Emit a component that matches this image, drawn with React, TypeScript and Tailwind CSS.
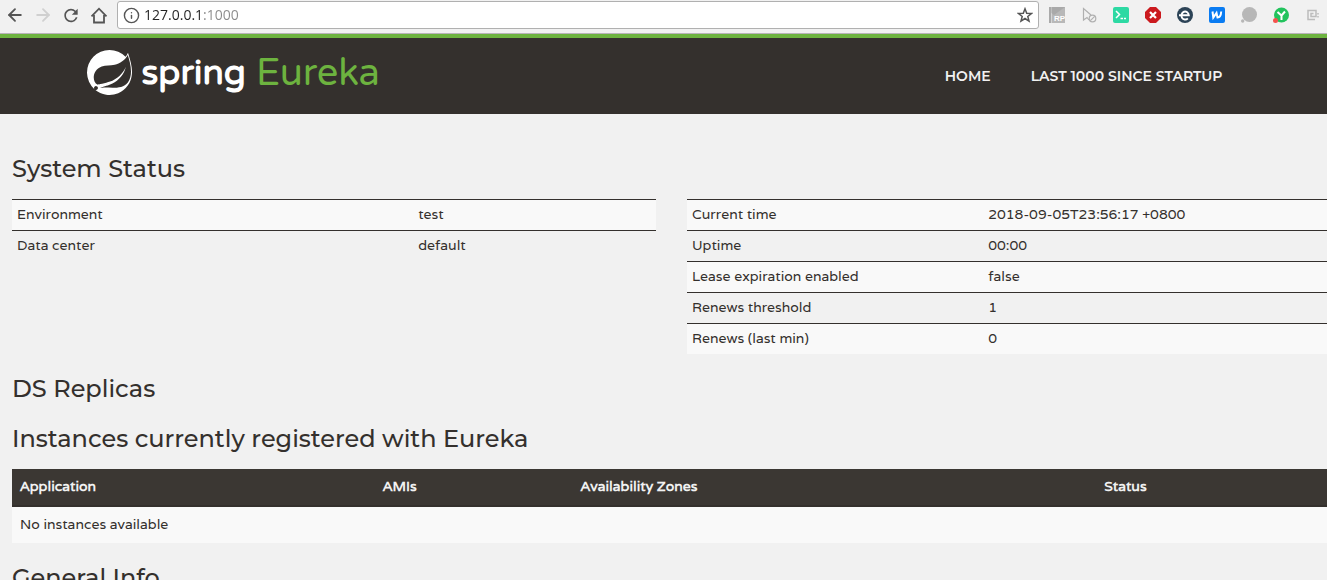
import { ReactNode } from "react";
import { ArrowLeft, ArrowRight, Info, Star } from "lucide-react";
import { MdRefresh } from "react-icons/md";
import { SiSpring } from "react-icons/si";

const environment = [
    ["Environment", "test"],
    ["Data center", "default"],
];

const status = [
    ["Current time", "2018-09-05T23:56:17 +0800"],
    ["Uptime", "00:00"],
    ["Lease expiration enabled", "false"],
    ["Renews threshold", "1"],
    ["Renews (last min)", "0"],
];

function ToolButton({ label, children }: { label: string; children: ReactNode }) {
    return (
        <button type="button" aria-label={label} className="flex size-5 shrink-0 items-center justify-center text-[#555]">
            {children}
        </button>
    );
}

function BrowserBar() {
    return (
        <div className="flex h-[34px] items-start gap-2 border-b border-[#b8b4b8] bg-[#f1f1f1] pt-px pr-1 pl-[5px]">
            <nav className="flex h-7 items-center gap-2" aria-label="Browser">
                <ToolButton label="Back"><ArrowLeft size={20} strokeWidth={2.2} /></ToolButton>
                <ToolButton label="Forward"><ArrowRight size={20} strokeWidth={2.2} className="text-[#d0d0d0]" /></ToolButton>
                <ToolButton label="Reload"><MdRefresh size={21} /></ToolButton>
                <ToolButton label="Home page">
                    <svg width="18" height="18" viewBox="0 0 18 18" fill="none" stroke="currentColor" strokeWidth="1.800">
                        <path d="M1.5 10.300 9 2.700l7.500 7.600M4 9v7.500h10V9" />
                    </svg>
                </ToolButton>
            </nav>
            <form className="flex h-7 flex-1 items-center gap-1 rounded-[3px] border border-[#b0b0b0] bg-white pr-[3px] pl-[5px]">
                <Info size={17} className="shrink-0 text-[#555]" />
                <input
                    type="text"
                    aria-label="Address"
                    defaultValue="127.0.0.1:1000"
                    className="h-6 min-w-0 flex-1 bg-[linear-gradient(90deg,#222_58px,#8a8a8a_58px)] bg-clip-text pb-0.5 font-['Open_Sans',sans-serif] text-sm text-transparent outline-none"
                />
                <ToolButton label="Bookmark">
                    <svg width="16" height="16" viewBox="0 0 16 16" fill="none" stroke="currentColor" strokeWidth="1.500">
                        <path d="m8 1.800 1.700 4.400 4.700.3-3.600 3 1.200 4.600L8 11.500l-4 2.600 1.200-4.600-3.600-3 4.700-.3z" />
                    </svg>
                </ToolButton>
            </form>
            <div className="flex h-7 items-center gap-3">
                <ToolButton label="RP">
                    <svg width="16" height="18" viewBox="0 0 16 18">
                        <path d="M0 1h2v16H0z" fill="#aaa" />
                        <path d="M2.500 1H16v16H2.500z" fill="#b8b8b8" />
                        <path d="M2.500 1H16L5 9 2.500 7z" fill="#a9a9a9" />
                        <text x="5" y="15" fontSize="8" fontWeight="700" fontFamily="Liberation Sans" fill="#fff">RP</text>
                    </svg>
                </ToolButton>
                <ToolButton label="Pointer">
                    <svg width="16" height="16" viewBox="0 0 16 16" fill="none" stroke="#b0b0b0" strokeWidth="1.200">
                        <path d="M8 13 6 10.500 2.500 13V1.500L10 8" />
                        <circle cx="11.500" cy="11.500" r="3.300" />
                        <path d="m9.300 13.700 4.400-4.400" />
                    </svg>
                </ToolButton>
                <ToolButton label="Terminal">
                    <svg width="16" height="16" viewBox="0 0 16 16">
                        <rect width="16" height="16" rx="2" fill="#2dd9a3" />
                        <path d="m3 4 3.500 3.500L3 11M7.500 11.500H10M11 11.500h2" fill="none" stroke="#fff" strokeWidth="1.500" />
                    </svg>
                </ToolButton>
                <ToolButton label="Blocked">
                    <svg width="16" height="16" viewBox="0 0 16 16">
                        <path d="M5 0h6l5 5v6l-5 5H5l-5-5V5z" fill="#cb1a1e" />
                        <path d="m5 5 6 6M11 5l-6 6" stroke="#fff" strokeWidth="2.200" />
                    </svg>
                </ToolButton>
                <ToolButton label="Edge">
                    <svg width="16" height="16" viewBox="0 0 16 16">
                        <circle cx="8" cy="8" r="8" fill="#2c4356" />
                        <path d="M2 8.300h9.800a3.700 4 0 1 0-1 3" fill="none" stroke="#fff" strokeWidth="1.900" />
                    </svg>
                </ToolButton>
                <ToolButton label="W">
                    <svg width="16" height="16" viewBox="0 0 16 16">
                        <rect width="16" height="16" rx="2" fill="#0a7cf2" />
                        <path d="m3.500 4.500.8 6L7.500 6l1 4.500c2 0 3.500-2 3.700-6" fill="none" stroke="#fff" strokeWidth="2" />
                    </svg>
                </ToolButton>
                <ToolButton label="Bubble">
                    <svg width="16" height="16" viewBox="0 0 16 16" fill="#b7b7b7">
                        <circle cx="8.500" cy="7.500" r="7.500" />
                        <circle cx="1.700" cy="14" r="1.700" />
                    </svg>
                </ToolButton>
                <ToolButton label="Y">
                    <svg width="16" height="16" viewBox="0 0 16 16">
                        <circle cx="8.500" cy="8" r="7.500" fill="#22c35d" />
                        <path d="m4.500 5 4 3.500 3.500-4M8.500 8v5" fill="none" stroke="#fff" strokeWidth="2" />
                        <circle cx="2.500" cy="13.500" r="2.500" fill="#f4524d" />
                    </svg>
                </ToolButton>
                <ToolButton label="Capture">
                    <svg width="12" height="12" viewBox="0 0 12 12" fill="none" stroke="#bcbcbc" strokeWidth="1.500">
                        <path d="M8 10.500H1V1.500h8v6H4V4.500h2.500M11 4v1.500M11 7v1.500" />
                    </svg>
                </ToolButton>
            </div>
        </div>
    );
}

function Header() {
    return (
        <header className="border-t-4 border-[#6db33f] bg-[#34302d]">
            <div className="mx-auto flex h-[76px] max-w-[1170px] items-center justify-between px-2">
                <a href="#" className="flex items-center gap-2.5 pb-[7px] font-['Varela_Round','Open_Sans',sans-serif] leading-10">
                    <SiSpring size={45} className="text-white" />
                    <span className="text-[35px] font-bold text-white">spring</span>
                    <span className="text-[38px] text-[#6db33f]">Eureka</span>
                </a>
                <nav className="-mr-0.5 flex font-['Montserrat','Inter',sans-serif] text-sm font-semibold text-[#f1f1f1] uppercase">
                    <a href="#" className="px-5">Home</a>
                    <a href="#" className="px-5">Last 1000 since startup</a>
                </nav>
            </div>
        </header>
    );
}

function Heading({ children }: { children: ReactNode }) {
    return <h1 className="py-[11px] font-['Montserrat','Inter',sans-serif] text-2xl leading-7 font-medium">{children}</h1>;
}

function InfoTable({ label, rows, keyWidth }: { label: string; rows: string[][]; keyWidth: string }) {
    return (
        <table aria-label={label} className="w-full table-fixed self-start text-left">
            <tbody>
                {rows.map(([name, value]) => (
                    <tr key={name} className="border-t border-[#34302d] odd:bg-[#f9f9f9]">
                        <td className={`px-[5px] pt-1 pb-1.5 ${keyWidth}`}>{name}</td>
                        <td className="px-[5px] pt-1 pb-1.5">{value}</td>
                    </tr>
                ))}
            </tbody>
        </table>
    );
}

export default function App() {
    return (
        <div className="min-h-screen overflow-hidden bg-[#f1f1f1] font-['Varela','Open_Sans',sans-serif] text-sm leading-5 text-[#34302d]">
            <BrowserBar />
            <Header />
            <main className="-mr-1 pt-[30px] pl-3">
                <Heading>System Status</Heading>
                <div className="mt-[5px] mb-2.5 grid grid-cols-2 gap-[31px]">
                    <InfoTable label="Environment" rows={environment} keyWidth="w-[62.3%]" />
                    <InfoTable label="Status" rows={status} keyWidth="w-[46%]" />
                </div>
                <Heading>DS Replicas</Heading>
                <Heading>Instances currently registered with Eureka</Heading>
                <table className="mt-[5px] mb-2.5 w-full table-fixed text-left">
                    <thead className="border-b-2 border-[#34302d] bg-[#3b3733] text-[#f1f1f1]">
                        <tr>
                            <th className="w-[27.5%] px-2 pt-[7px] pb-[9px]">Application</th>
                            <th className="w-[15%] px-2 pt-[7px] pb-[9px]">AMIs</th>
                            <th className="w-[39.7%] px-2 pt-[7px] pb-[9px]">Availability Zones</th>
                            <th className="px-2 pt-[7px] pb-[9px]">Status</th>
                        </tr>
                    </thead>
                    <tbody>
                        <tr className="bg-[#f9f9f9]">
                            <td colSpan={4} className="px-2 pt-[7px] pb-[9px]">No instances available</td>
                        </tr>
                    </tbody>
                </table>
                <Heading>General Info</Heading>
            </main>
        </div>
    );
}
